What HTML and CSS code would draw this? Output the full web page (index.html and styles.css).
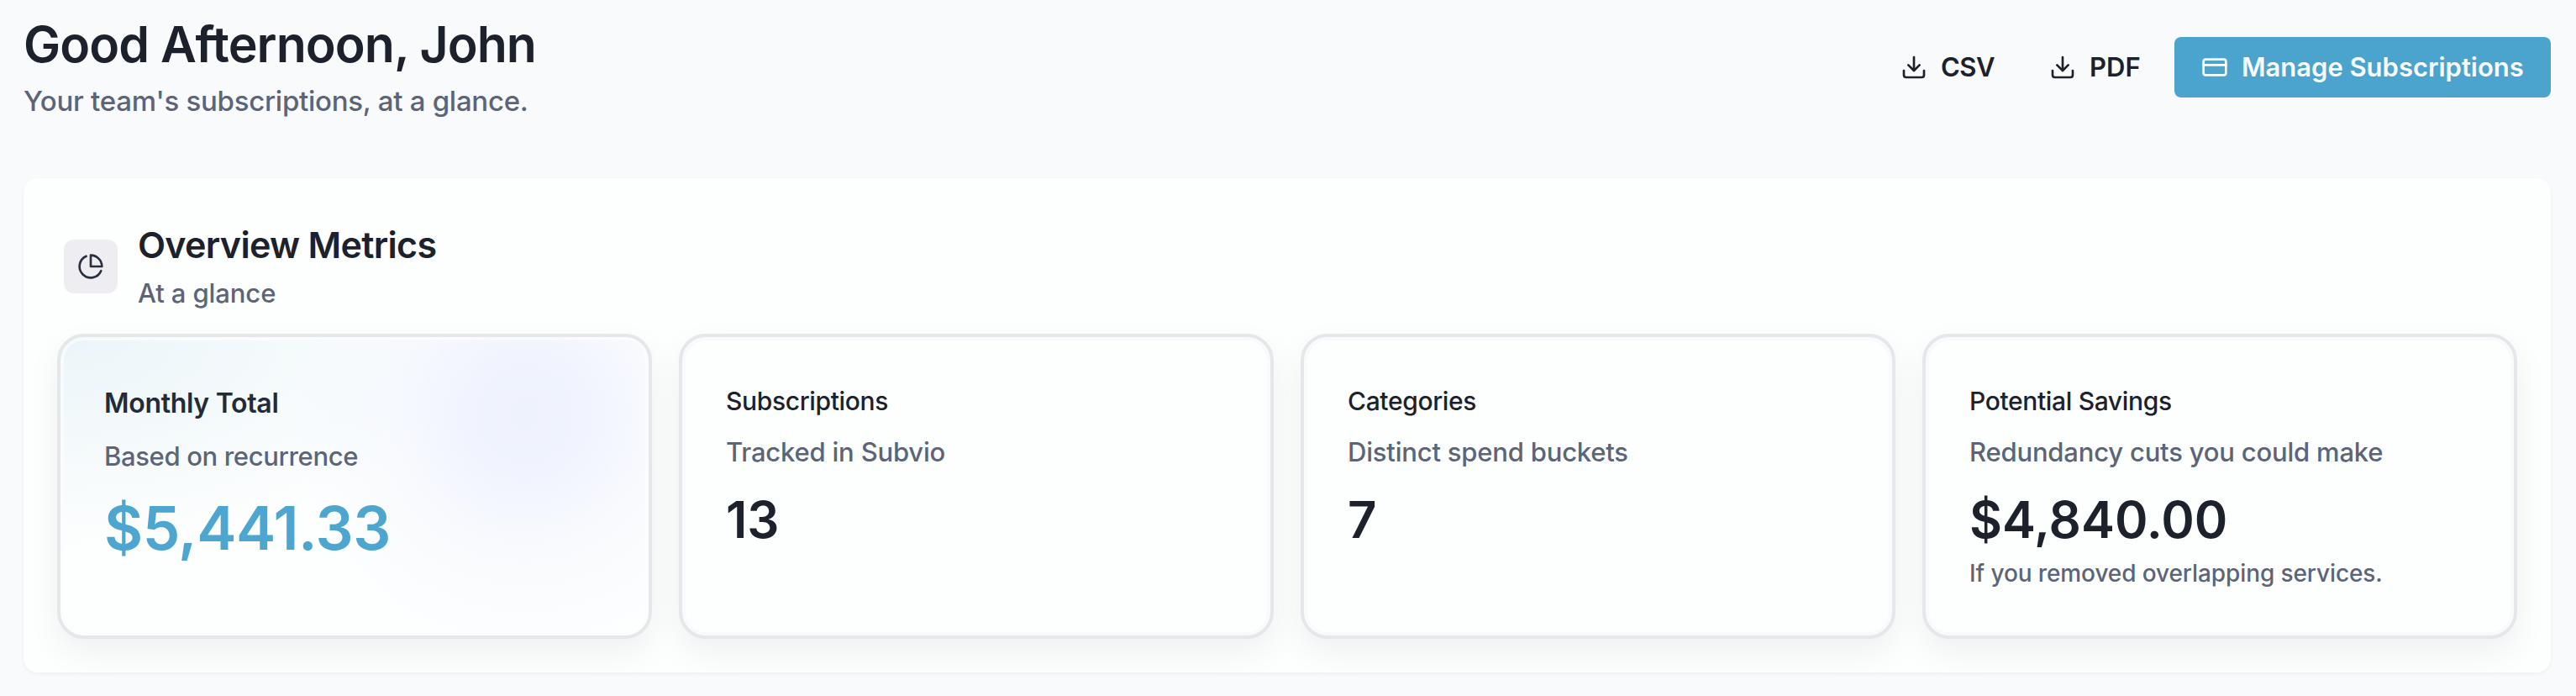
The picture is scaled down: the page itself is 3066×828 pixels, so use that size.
FILE: index.html
```
<!DOCTYPE html>
<html lang="en">

<head>
    <meta charset="UTF-8" />
    <meta name="viewport" content="width=device-width, initial-scale=1" />
    <title>Subvio</title>
    <link rel="stylesheet" href="styles.css">
</head>

<body>
    <header class="page-header">
        <div>
            <h1>Good Afternoon, John</h1>
            <p class="subtitle">Your team's subscriptions, at a glance.</p>
        </div>

        <div class="actions">
            <button class="btn btn-csv">
                <svg class="icon" viewBox="0 0 24 24">
                    <path d="M21 15v4a2 2 0 0 1-2 2H5a2 2 0 0 1-2-2v-4" />
                    <path d="m7 10 5 5 5-5" />
                    <path d="M12 15V3" />
                </svg>
                CSV
            </button>
            <button class="btn btn-pdf">
                <svg class="icon" viewBox="0 0 24 24">
                    <path d="M21 15v4a2 2 0 0 1-2 2H5a2 2 0 0 1-2-2v-4" />
                    <path d="m7 10 5 5 5-5" />
                    <path d="M12 15V3" />
                </svg>
                PDF
            </button>
            <button class="btn btn-primary">
                <svg class="icon" viewBox="0 0 24 24">
                    <rect x="2" y="5" width="20" height="14" rx="2" />
                    <path d="M2 10h20" />
                </svg>
                Manage Subscriptions
            </button>
        </div>
    </header>

    <section class="panel">
        <div class="panel-header">
            <div class="panel-icon">
                <svg class="icon" viewBox="0 0 24 24">
                    <path d="M21.21 15.89A10 10 0 1 1 8 2.83" />
                    <path d="M22 12A10 10 0 0 0 12 2v10z" />
                </svg>
            </div>
            <div>
                <h2>Overview Metrics</h2>
                <p class="panel-text">At a glance</p>
            </div>
        </div>

        <div class="metrics">
            <article class="card card-featured">
                <h3>Monthly Total</h3>
                <p class="card-text">Based on recurrence</p>
                <p class="value">$5,441.33</p>
            </article>
            <article class="card">
                <h3>Subscriptions</h3>
                <p class="card-text">Tracked in Subvio</p>
                <p class="value">13</p>
            </article>
            <article class="card">
                <h3>Categories</h3>
                <p class="card-text">Distinct spend buckets</p>
                <p class="value">7</p>
            </article>
            <article class="card">
                <h3>Potential Savings</h3>
                <p class="card-text">Redundancy cuts you could make</p>
                <p class="value">$4,840.00</p>
                <p class="note">If you removed overlapping services.</p>
            </article>
        </div>
    </section>
</body>

</html>
```
FILE: styles.css
```
* {
    box-sizing: border-box;
}

body {
    margin: 0;
    padding: 16px 30px 28px 28px;
    background: #f9fafc;
    color: #1c212c;
    font-family: Inter, "Liberation Sans", sans-serif;
}

h1,
h2,
h3,
p {
    margin: 0;
}

.icon {
    width: 32px;
    height: 32px;
    flex: none;
    fill: none;
    stroke: currentColor;
    stroke-width: 2;
    stroke-linecap: round;
    stroke-linejoin: round;
}

/* Header */
.page-header {
    display: flex;
    justify-content: space-between;
    align-items: flex-start;
    height: 128px;
}

h1 {
    font-size: 59px;
    line-height: 73px;
    font-weight: 600;
    letter-spacing: -0.95px;
}

.subtitle {
    margin-top: 7px;
    color: #5c6478;
    font-size: 33px;
    line-height: 48px;
    font-weight: 450;
    letter-spacing: -0.27px;
}

.actions {
    display: flex;
    gap: 16px;
    padding-top: 28px;
}

.btn {
    display: flex;
    align-items: center;
    gap: 16px;
    height: 72px;
    padding: 0 24px;
    border: none;
    border-radius: 8px;
    background: transparent;
    color: inherit;
    font: 600 31px/40px Inter, "Liberation Sans", sans-serif;
    white-space: nowrap;
    cursor: pointer;
}

.btn-csv {
    width: 161px;
    letter-spacing: -0.5px;
}

.btn-pdf {
    width: 157px;
}

.btn-primary {
    width: 448px;
    padding: 0 32px;
    background: #4aa4cd;
    color: #fafbfd;
    letter-spacing: -0.03px;
}

/* Overview panel */
.panel {
    margin-top: 68px;
    padding: 51px 40px 40px;
    border-radius: 16px;
    background: #fdfefe;
    box-shadow: 0 0 2px rgba(20, 25, 40, 0.04), 0 2px 4px rgba(20, 25, 40, 0.04);
}

.panel-header {
    display: flex;
    align-items: center;
    gap: 24px;
    padding-left: 8px;
}

.panel-icon {
    display: flex;
    align-items: center;
    justify-content: center;
    width: 64px;
    height: 64px;
    border-radius: 12px;
    background: #eeeef2;
    color: #283040;
}

h2 {
    font-size: 43px;
    line-height: 56px;
    font-weight: 600;
    letter-spacing: -0.7px;
}

.panel-text {
    margin-top: 8px;
    color: #5c6478;
    font-size: 31px;
    line-height: 44px;
    font-weight: 450;
    letter-spacing: -0.1px;
}

/* Metric cards */
.metrics {
    display: grid;
    grid-template-columns: repeat(4, 1fr);
    gap: 32px;
    margin-top: 26px;
}

.card {
    height: 363px;
    padding: 56px 52px 0;
    border: 4px solid #e6e7ea;
    border-radius: 32px;
    background: #fdfefe;
    box-shadow: inset 0 0 0 4px #fafafd, 0 16px 40px rgba(20, 25, 40, 0.06);
}

h3 {
    font-size: 30px;
    line-height: 40px;
    font-weight: 500;
    letter-spacing: -0.35px;
}

.card-text {
    margin-top: 19px;
    color: #5c6478;
    font-size: 31px;
    line-height: 44px;
    font-weight: 450;
    letter-spacing: -0.2px;
}

.value {
    margin-top: 28px;
    font-size: 60px;
    line-height: 60px;
    font-weight: 600;
}

.note {
    margin-top: 14px;
    color: #5c6478;
    font-size: 28px;
    line-height: 40px;
    font-weight: 450;
    letter-spacing: -0.1px;
}

.card-featured {
    background:
        radial-gradient(circle at 79% 26%, #eef2fd 0, rgba(238, 242, 253, 0.85) 70px, rgba(240, 244, 253, 0.4) 160px, rgba(244, 247, 254, 0) 280px),
        radial-gradient(ellipse at 0 0, #ebf5f9 0, rgba(235, 245, 249, 0) 50%),
        #fdfefe;
    box-shadow: inset 0 0 0 4px rgba(252, 252, 254, 0.7), 0 16px 40px rgba(20, 25, 40, 0.06);
}

.card-featured h3 {
    margin-top: 1px;
    color: #232b39;
    font-size: 32px;
    line-height: 44px;
    font-weight: 600;
    letter-spacing: -0.3px;
}

.card-featured .card-text {
    margin-top: 19px;
    letter-spacing: -0.35px;
}

.card-featured .value {
    margin-top: 27px;
    color: #4da6cf;
    font-size: 71px;
    line-height: 72px;
    letter-spacing: -0.5px;
}
```
